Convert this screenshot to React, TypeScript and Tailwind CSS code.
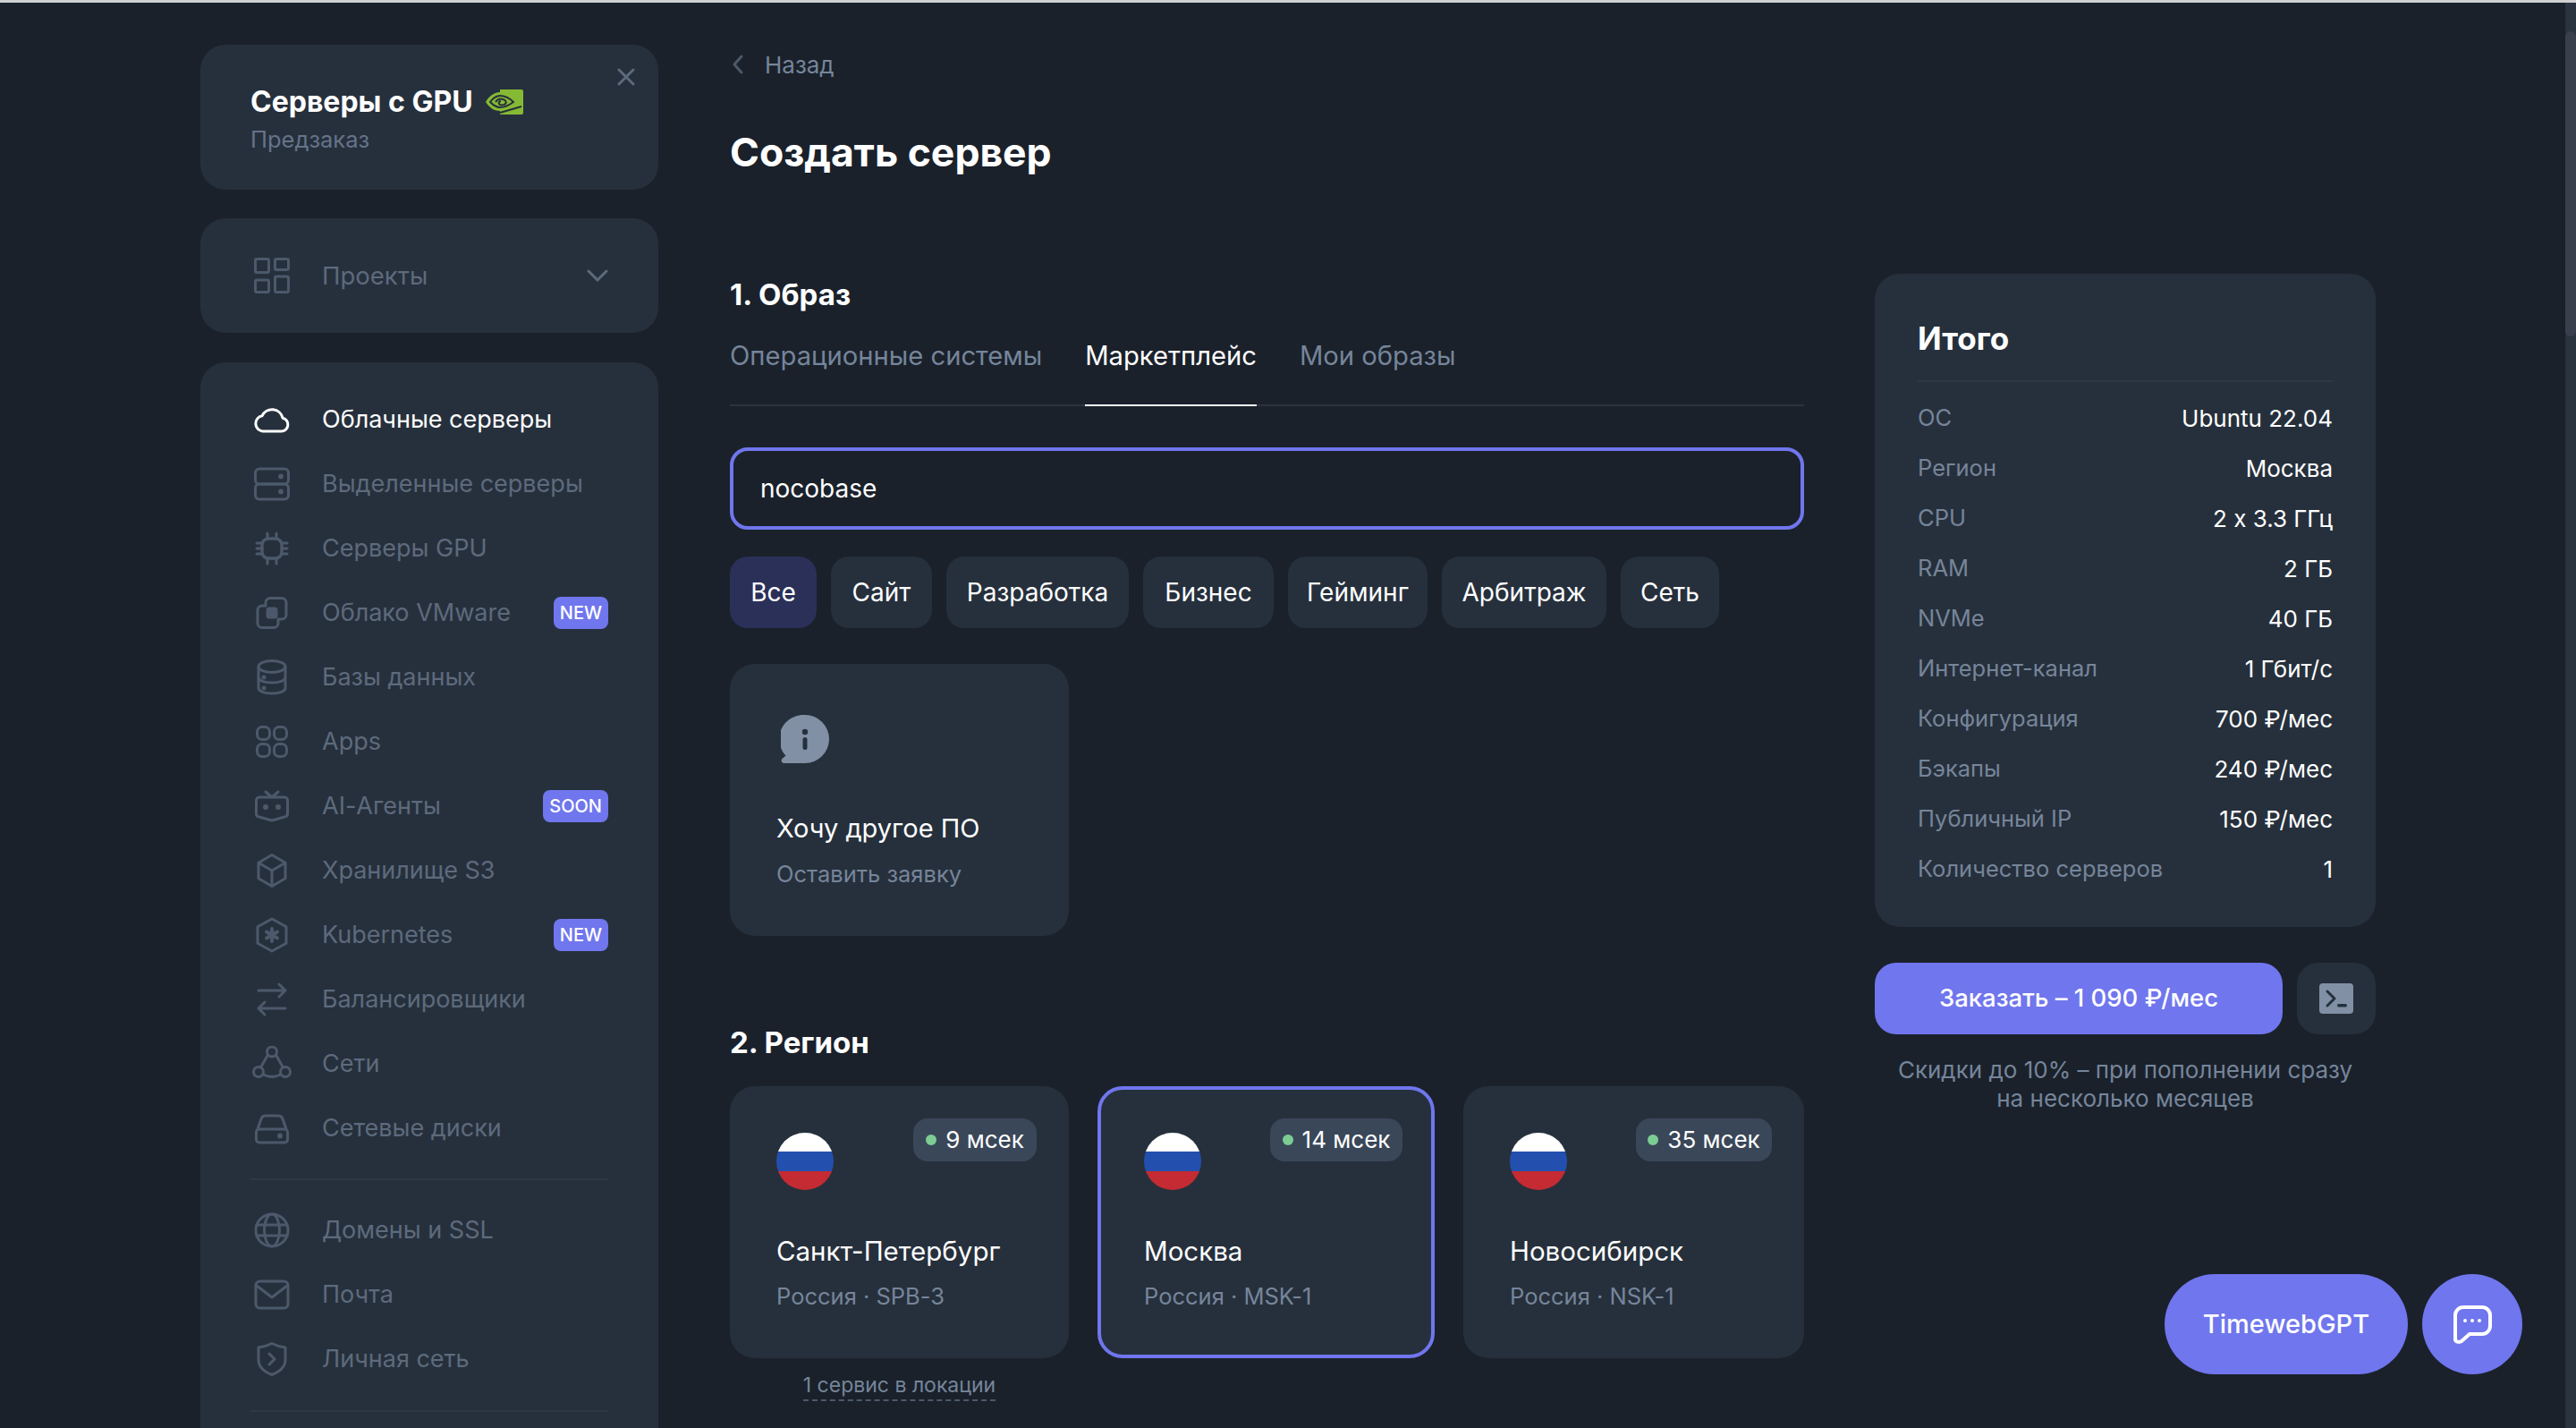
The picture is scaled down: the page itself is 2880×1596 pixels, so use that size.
import React from "react";

const S = ({ children, w = 40, h = 40, vb = "0 0 40 40", sw = 3, c = "text-[#4c596b]" }: any) => (
  <svg width={w} height={h} viewBox={vb} fill="none" stroke="currentColor" strokeWidth={sw} strokeLinecap="round" strokeLinejoin="round" className={`shrink-0 ${c}`}>
    {children}
  </svg>
);

const icons: Record<string, React.ReactNode> = {
  cloud: <path d="M9.5 33h21a7.5 7.5 0 0 0 1.6-14.8A12.3 12.3 0 0 0 9 15.8 8.7 8.7 0 0 0 9.5 33z" />,
  server: <><rect x="1.5" y="3" width="37" height="17" rx="4.5" /><rect x="1.5" y="20" width="37" height="17" rx="4.5" /><circle cx="30" cy="11.5" r="1.4" fill="currentColor" /><circle cx="30" cy="28.5" r="1.4" fill="currentColor" /></>,
  chip: <><rect x="9" y="9" width="22" height="22" rx="7" strokeWidth="3.4" /><path d="M15 3v6M25 3v6M15 31v6M25 31v6M3 14h6M3 20h6M3 26h6M31 14h6M31 20h6M31 26h6" /></>,
  vmware: <><path d="M13 12V8.500a5 5 0 0 1 5-5h13a5 5 0 0 1 5 5V22a5 5 0 0 1-5 5h-4v4.500a5 5 0 0 1-5 5H9a5 5 0 0 1-5-5V17a5 5 0 0 1 5-5z" /><rect x="15" y="15" width="10" height="10" rx="2" fill="currentColor" /></>,
  db: <><ellipse cx="20" cy="8" rx="15" ry="6.500" /><path d="M5 8v24c0 3.500 6.700 6 15 6s15-2.500 15-6V8M5 20c0 3.500 6.700 6 15 6s15-2.500 15-6" /><circle cx="11" cy="20" r="1" fill="currentColor" /><circle cx="11" cy="32" r="1" fill="currentColor" /></>,
  apps: <><rect x="3.500" y="3.500" width="14" height="14" rx="5.500" /><rect x="22.500" y="3.500" width="14" height="14" rx="5.500" /><rect x="3.500" y="22.500" width="14" height="14" rx="5.500" /><rect x="22.500" y="22.500" width="14" height="14" rx="5.500" /></>,
  bot: <><path d="M13 4l7 6 7-6" /><path d="M6 10h28a3.500 3.500 0 0 1 3.500 3.500v15.300a3 3 0 0 1-2.200 2.900L20 36 4.700 31.700a3 3 0 0 1-2.200-2.900V13.500A3.500 3.500 0 0 1 6 10z" /><circle cx="13" cy="21" r="3" fill="currentColor" stroke="none" /><circle cx="27" cy="21" r="3" fill="currentColor" stroke="none" /></>,
  cube: <path d="M20 2.500l15 8.700v17.600l-15 8.700-15-8.700V11.200zM5 11.200l15 8.800 15-8.800M20 20v17.500" />,
  k8s: <><path d="M20 2l16 8.800v18.400L20 38 4 29.200V10.800z" /><path d="M20 13v14M14 16.500l12 7M26 16.500l-12 7" strokeWidth="4" /></>,
  arrows: <path d="M5 10h30M28 3l7 7-7 7M35 30H5M12 23l-7 7 7 7" />,
  net: <><circle cx="22" cy="6.500" r="5.500" /><circle cx="7" cy="29" r="5.500" /><circle cx="37" cy="29" r="5.500" /><path d="M17.500 10L9.500 24M26.500 10l8 14M12.500 32c6 3 13 3 19 0" /></>,
  disk: <><path d="M4 21L8 9.500A5 5 0 0 1 12.700 6h14.600A5 5 0 0 1 32 9.500L36 21" /><rect x="2.500" y="21" width="35" height="15" rx="3.500" /><circle cx="29" cy="28.500" r="1.500" fill="currentColor" /></>,
  globe: <><circle cx="20" cy="20" r="18" /><ellipse cx="20" cy="20" rx="8.500" ry="18" /><path d="M3 14h34M3 26h34" /></>,
  mail: <><rect x="2" y="5" width="36" height="30" rx="4.500" /><path d="M3 10l17 13 17-13" /></>,
  shield: <><path d="M20 2.500c5 2.500 10 4 15 4.500v14c0 8-6 13-15 16.500C11 34 5 29 5 21V7c5-.5 10-2 15-4.500z" /><path d="M17 14l6 6-6 6" /></>,
};

const Nav = ({ icon, label, active, badge }: any) => (
  <div className="flex items-center h-[72px] pl-[60px] pr-[56px]">
    <span className="w-[40px] mr-[36px] flex justify-center">
      <S w={icon === "net" ? 44 : 40} vb={icon === "net" ? "0 0 44 40" : "0 0 40 40"} c={active ? "text-white" : "text-[#4c596b]"}>{icons[icon]}</S>
    </span>
    <span className={`text-[27px] leading-[36px] whitespace-nowrap ${active ? "text-white" : "text-[#5d6a7c]"}`}>{label}</span>
    {badge && <span className="ml-auto h-[36px] px-[7px] flex items-center rounded-[8px] bg-[#7076ed] text-white text-[20px] font-medium">{badge}</span>}
  </div>
);

const Row = ({ k, v }: any) => (
  <div className="flex justify-between items-center h-[56px]">
    <span className="text-[#76859a] text-[25.5px]">{k}</span>
    <span className="text-white text-[26px]">{v}</span>
  </div>
);

const Chip = ({ t, a, w }: any) => (
  <div className={`h-[80px] flex items-center justify-center rounded-[20px] text-[28px] text-white ${a ? "bg-[#2a3058]" : "bg-[#26303c]"} ${w}`}>{t}</div>
);

const Region = ({ name, sub, ms, bw, sel, w }: any) => (
  <div className={`h-[304px] rounded-[28px] bg-[#26303c] ${w} ${sel ? "border-4 border-[#7076ed] pl-[48px] pr-[32px] pt-[32px]" : "pl-[52px] pr-[36px] pt-[36px]"}`}>
    <div className="flex justify-between items-start h-[128px]">
      <div className="w-[64px] h-[64px] mt-[16px] rounded-full overflow-hidden flex flex-col">
        <div className="h-[21px] bg-white" />
        <div className="h-[22px] bg-[#2350ae]" />
        <div className="h-[21px] bg-[#c42b33]" />
      </div>
      <div className={`h-[48px] flex items-center justify-center gap-[10px] rounded-[16px] bg-[#3a4759] text-white text-[26px] pb-[2px] ${bw}`}>
        <span className="w-[12px] h-[12px] mt-[2px] rounded-full bg-[#7ccc93]" />
        {ms}
      </div>
    </div>
    <div className="text-white text-[29.5px] leading-[40px]">{name}</div>
    <div className="mt-[13px] text-[#76859a] text-[25.5px] leading-[36px]">{sub}</div>
  </div>
);

export default function App() {
  return (
    <div className="relative w-[2880px] h-[1596px] overflow-hidden bg-[#1a212b] border-t-[3px] border-[#cfd0d1] flex font-['Inter',sans-serif] [font-feature-settings:'calt'_0]">
      {/* Sidebar */}
      <aside className="ml-[224px] w-[512px] shrink-0 pt-[47px] flex flex-col">
        <div className="relative shrink-0 h-[162px] rounded-[28px] bg-[#26303c] pl-[56px] pt-[42px]">
          <div className="flex items-center h-[44px]">
            <span className="text-white font-bold text-[32px] leading-[44px]">Серверы с GPU</span>
            <svg width="42" height="28" viewBox="0 0 42 28" className="ml-[14px]">
              <path d="M16 0h24a2 2 0 0 1 2 2v24a2 2 0 0 1-2 2H16z" fill="#86b934" />
              <path d="M0 14C4 7 10 3 16 3c8-.5 14 2 20 10-5 7-11 10-20 11C9 24 4 20 0 14z" fill="#86b934" />
              <path d="M5 14c3-4 7-7 11-7 7 0 11 3 15 7-4 3-8 6-15 6-4 0-8-3-11-6z" fill="none" stroke="#26303c" strokeWidth="2" />
              <path d="M11 14c2-3 5-4 8-3 3 .5 5 3 3 5-2 2-6 2-7 0-1-1.500 0-3 2-3" fill="none" stroke="#26303c" strokeWidth="2" />
              <path d="M16 26l24-7" stroke="#26303c" strokeWidth="2" />
            </svg>
          </div>
          <div className="text-[#65738a] text-[25.5px] leading-[36px] mt-[2px]">Предзаказ</div>
          <svg width="20" height="20" viewBox="0 0 20 20" className="absolute right-[26px] top-[26px] text-[#5d6a7c]" fill="none" stroke="currentColor" strokeWidth="3" strokeLinecap="round">
            <path d="M2 2l16 16M18 2L2 18" />
          </svg>
        </div>
        <div className="mt-[32px] shrink-0 h-[128px] rounded-[28px] bg-[#26303c] flex items-center pl-[60px] pr-[56px]">
          <S c="text-[#4c596b]">
            <rect x="1.500" y="1.500" width="15" height="15" rx="1.500" />
            <rect x="23.500" y="1.500" width="15" height="12" rx="1.500" />
            <rect x="1.500" y="25" width="15" height="13.500" rx="1.500" />
            <rect x="23.500" y="21" width="15" height="17.500" rx="1.500" />
          </S>
          <span className="ml-[36px] text-[27.5px] pt-[2px] text-[#5d6a7c]">Проекты</span>
          <svg width="24" height="14" viewBox="0 0 24 14" className="ml-auto text-[#5d6a7c]" fill="none" stroke="currentColor" strokeWidth="3" strokeLinecap="round" strokeLinejoin="round">
            <path d="M2 2l10 10L22 2" />
          </svg>
        </div>
        <div className="mt-[33px] shrink-0 rounded-t-[28px] bg-[#26303c] pt-[28px] h-[1300px]">
          <Nav icon="cloud" label="Облачные серверы" active />
          <Nav icon="server" label="Выделенные серверы" />
          <Nav icon="chip" label="Серверы GPU" />
          <Nav icon="vmware" label="Облако VMware" badge="NEW" />
          <Nav icon="db" label="Базы данных" />
          <Nav icon="apps" label="Apps" />
          <Nav icon="bot" label="AI-Агенты" badge="SOON" />
          <Nav icon="cube" label="Хранилище S3" />
          <Nav icon="k8s" label="Kubernetes" badge="NEW" />
          <Nav icon="arrows" label="Балансировщики" />
          <Nav icon="net" label="Сети" />
          <Nav icon="disk" label="Сетевые диски" />
          <div className="mx-[56px] my-[20px] h-[2px] bg-[#2d3745]" />
          <Nav icon="globe" label="Домены и SSL" />
          <Nav icon="mail" label="Почта" />
          <Nav icon="shield" label="Личная сеть" />
          <div className="mx-[56px] mt-[21px] h-[2px] bg-[#2d3745]" />
        </div>
      </aside>

      {/* Main */}
      <main className="ml-[80px] w-[1201px] shrink-0">
        <div className="mt-[49px] h-[40px] flex items-center">
          <svg width="14" height="24" viewBox="0 0 14 24" className="ml-[2px] text-[#4c596b]" fill="none" stroke="currentColor" strokeWidth="3" strokeLinecap="round" strokeLinejoin="round">
            <path d="M11 3L3 12l8 9" />
          </svg>
          <span className="ml-[23px] text-[26px] text-[#76859a]">Назад</span>
        </div>
        <h1 className="mt-[48px] h-[60px] text-[44.500px] leading-[60px] font-bold text-white">Создать сервер</h1>
        <h2 className="mt-[109px] h-[40px] text-[33px] leading-[40px] font-bold text-white">1. Образ</h2>
        <div className="mt-[21px] h-[84px] flex gap-[48px] border-b-2 border-[#2a333f] text-[29.2px]">
          <div className="pt-[6px] h-[84px] text-[#76859a]">Операционные системы</div>
          <div className="pt-[6px] h-[84px] text-white border-b-2 border-white">Маркетплейс</div>
          <div className="pt-[6px] h-[84px] text-[#76859a]">Мои образы</div>
        </div>
        <div className="mt-[46px] h-[92px] rounded-[20px] border-4 border-[#7076ed] flex items-center pl-[30px] text-white text-[28px]">nocobase</div>
        <div className="mt-[30px] flex gap-[16px]">
          <Chip t="Все" a w="w-[97px]" />
          <Chip t="Сайт" w="w-[113px]" />
          <Chip t="Разработка" w="w-[204px]" />
          <Chip t="Бизнес" w="w-[146px]" />
          <Chip t="Гейминг" w="w-[156px]" />
          <Chip t="Арбитраж" w="w-[184px]" />
          <Chip t="Сеть" w="w-[110px]" />
        </div>
        <div className="mt-[40px] w-[379px] h-[304px] rounded-[28px] bg-[#26303c] pl-[52px] pt-[57px]">
          <svg width="54" height="54" viewBox="0 0 54 54" className="ml-[5px]">
            <path d="M27 0a27 27 0 0 1 0 54H3.500c-2.500 0-4-3-2-5l4-3.500A27 27 0 0 1 27 0z" fill="#8190a5" />
            <circle cx="27" cy="19" r="3.200" fill="#26303c" />
            <rect x="24.500" y="25" width="5" height="14" rx="2.500" fill="#26303c" />
          </svg>
          <div className="mt-[53px] text-white text-[29px] leading-[40px]">Хочу другое ПО</div>
          <div className="mt-[13px] text-[#76859a] text-[25.5px] leading-[36px]">Оставить заявку</div>
        </div>
        <h2 className="mt-[99px] h-[40px] text-[33px] leading-[40px] font-bold text-white">2. Регион</h2>
        <div className="mt-[29px] flex gap-[32px]">
          <Region w="w-[379px]" name="Санкт-Петербург" sub="Россия · SPB-3" ms="9 мсек" bw="w-[138px]" />
          <Region w="w-[377px]" name="Москва" sub="Россия · MSK-1" ms="14 мсек" bw="w-[148px]" sel />
          <Region w="w-[381px]" name="Новосибирск" sub="Россия · NSK-1" ms="35 мсек" bw="w-[152px]" />
        </div>
        <div className="mt-[14px] w-[379px] flex justify-center">
          <span className="text-[23px] leading-[32px] text-[#76859a] border-b-2 border-dashed border-[#4c596b]">1 сервис в локации</span>
        </div>
      </main>

      {/* Summary */}
      <section className="ml-[79px] w-[560px] shrink-0 pt-[303px]">
        <div className="h-[730px] rounded-[28px] bg-[#26303c] px-[48px]">
          <div className="h-[121px] border-b-2 border-[#2f3946] pt-[50px] text-white text-[35px] leading-[44px] font-bold">Итого</div>
          <div className="mt-[12px]">
            <Row k="ОС" v="Ubuntu 22.04" />
            <Row k="Регион" v="Москва" />
            <Row k="CPU" v="2 x 3.3 ГГц" />
            <Row k="RAM" v="2 ГБ" />
            <Row k="NVMe" v="40 ГБ" />
            <Row k="Интернет-канал" v="1 Гбит/с" />
            <Row k="Конфигурация" v="700 ₽/мес" />
            <Row k="Бэкапы" v="240 ₽/мес" />
            <Row k="Публичный IP" v="150 ₽/мес" />
            <Row k="Количество серверов" v="1" />
          </div>
        </div>
        <div className="mt-[40px] flex gap-[16px]">
          <div className="w-[456px] h-[80px] rounded-[24px] bg-[#7076ed] flex items-center justify-center text-white text-[27.5px] font-medium">Заказать – 1 090 ₽/мес</div>
          <div className="w-[88px] h-[80px] rounded-[24px] bg-[#26303c] flex items-center justify-center">
            <svg width="38" height="34" viewBox="0 0 38 34">
              <rect width="38" height="34" rx="4" fill="#8190a5" />
              <path d="M9 9l8 8-8 8" fill="none" stroke="#26303c" strokeWidth="3" strokeLinecap="round" strokeLinejoin="round" />
              <rect x="20" y="23" width="11" height="3.500" rx="1.700" fill="#26303c" />
            </svg>
          </div>
        </div>
        <div className="mt-[24px] text-center text-[26px] leading-[32px] text-[#76859a]">
          Скидки до 10% – при пополнении сразу<br />на несколько месяцев
        </div>
      </section>

      {/* Floating */}
      <div className="absolute left-[2420px] top-[1421px] w-[272px] h-[112px] rounded-full bg-[#7076ed] flex items-center justify-center text-white text-[29px] font-medium">TimewebGPT</div>
      <div className="absolute left-[2708px] top-[1421px] w-[112px] h-[112px] rounded-full bg-[#7076ed] flex items-center justify-center">
        <svg width="44" height="44" viewBox="0 0 44 44" fill="none" stroke="white" strokeWidth="4" strokeLinecap="round" strokeLinejoin="round">
          <path d="M12 3h21a9 9 0 0 1 9 9v12a9 9 0 0 1-9 9H19l-9 8c-2 1.500-7 1-7-2V12a9 9 0 0 1 9-9z" />
          <circle cx="14" cy="18" r="1" fill="white" strokeWidth="2" />
          <circle cx="22" cy="18" r="1" fill="white" strokeWidth="2" />
          <circle cx="30" cy="18" r="1" fill="white" strokeWidth="2" />
        </svg>
      </div>
      {/* Scrollbar */}
      <div className="absolute right-0 top-0 bottom-0 w-[12px] bg-[#2a3340] pt-[32px]">
        <div className="h-[341px] rounded-full bg-[#3a3f4e]" />
      </div>
    </div>
  );
}
